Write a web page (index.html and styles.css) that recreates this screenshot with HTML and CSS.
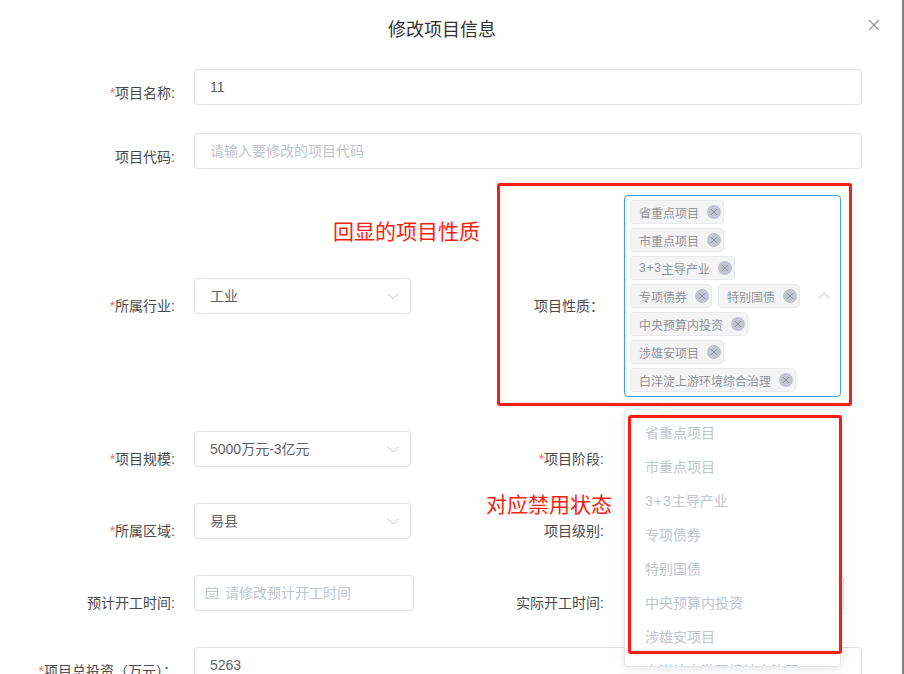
FILE: index.html
```html
<!DOCTYPE html>
<html lang="zh-CN">
<head>
<meta charset="utf-8">
<title>修改项目信息</title>
<link rel="stylesheet" href="styles.css">
</head>
<body>
<div class="dialog">
  <header class="dialog-header">
    <h2 class="dialog-title">修改项目信息</h2>
    <svg class="close" viewBox="0 0 12 12"><path d="M1 1l10 10M11 1L1 11"/></svg>
  </header>
  <form class="form">
    <div class="row row-a row-full">
      <label class="label"><i>*</i>项目名称:</label>
      <div class="field wide"><span class="value">11</span></div>
    </div>
    <div class="row row-b row-full">
      <label class="label">项目代码:</label>
      <div class="field wide"><span class="placeholder">请输入要修改的项目代码</span></div>
    </div>
    <div class="row row-c">
      <label class="label"><i>*</i>所属行业:</label>
      <div class="field select"><span class="value">工业</span><svg class="chev" viewBox="0 0 12 7"><path d="M1 1l5 5 5-5"/></svg></div>
      <label class="label label-right">项目性质：</label>
      <div class="tagbox">
        <div class="tags">
          <span class="tag">省重点项目<b class="x"><svg viewBox="0 0 14 14"><path d="M4 4l6 6M10 4l-6 6"/></svg></b></span>
          <span class="tag">市重点项目<b class="x"><svg viewBox="0 0 14 14"><path d="M4 4l6 6M10 4l-6 6"/></svg></b></span>
          <span class="tag"><span class="num">3+3</span>主导产业<b class="x"><svg viewBox="0 0 14 14"><path d="M4 4l6 6M10 4l-6 6"/></svg></b></span>
          <span class="tag">专项债券<b class="x"><svg viewBox="0 0 14 14"><path d="M4 4l6 6M10 4l-6 6"/></svg></b></span>
          <span class="tag">特别国债<b class="x"><svg viewBox="0 0 14 14"><path d="M4 4l6 6M10 4l-6 6"/></svg></b></span>
          <span class="tag">中央预算内投资<b class="x"><svg viewBox="0 0 14 14"><path d="M4 4l6 6M10 4l-6 6"/></svg></b></span>
          <span class="tag">涉雄安项目<b class="x"><svg viewBox="0 0 14 14"><path d="M4 4l6 6M10 4l-6 6"/></svg></b></span>
          <span class="tag">白洋淀上游环境综合治理<b class="x"><svg viewBox="0 0 14 14"><path d="M4 4l6 6M10 4l-6 6"/></svg></b></span>
        </div>
        <svg class="chev chev-up" viewBox="0 0 12 7"><path d="M1 6l5-5 5 5"/></svg>
      </div>
    </div>
    <div class="row">
      <label class="label"><i>*</i>项目规模:</label>
      <div class="field select"><span class="value">5000万元-3亿元</span><svg class="chev" viewBox="0 0 12 7"><path d="M1 1l5 5 5-5"/></svg></div>
      <label class="label label-right"><i>*</i>项目阶段:</label>
      <div class="field select right"></div>
    </div>
    <div class="row">
      <label class="label"><i>*</i>所属区域:</label>
      <div class="field select"><span class="value">易县</span><svg class="chev" viewBox="0 0 12 7"><path d="M1 1l5 5 5-5"/></svg></div>
      <label class="label label-right">项目级别:</label>
      <div class="field select right"></div>
    </div>
    <div class="row">
      <label class="label">预计开工时间:</label>
      <div class="field date">
        <svg class="cal" viewBox="0 0 14 14"><path d="M1.5 2.5h11v10h-11zM1.5 5.5h11M4 8h6M4 10.5h6M4 1v2M10 1v2"/></svg>
        <span class="placeholder">请修改预计开工时间</span>
      </div>
      <label class="label label-right">实际开工时间:</label>
      <div class="field date right"></div>
    </div>
    <div class="row row-full">
      <label class="label label-long"><i>*</i>项目总投资（万元）：</label>
      <div class="field wide"><span class="value">5263</span></div>
    </div>
  </form>
  <div class="popup">
    <ul class="options">
      <li>省重点项目</li>
      <li>市重点项目</li>
      <li><span class="num">3+3</span>主导产业</li>
      <li>专项债券</li>
      <li>特别国债</li>
      <li>中央预算内投资</li>
      <li>涉雄安项目</li>
      <li>白洋淀上游环境综合治理</li>
    </ul>
  </div>
  <div class="mark mark-top"></div>
  <div class="mark mark-bottom"></div>
  <div class="note note-top">回显的项目性质</div>
  <div class="note note-bottom">对应禁用状态</div>
</div>
</body>
</html>
```
FILE: styles.css
```css
html,body{margin:0;padding:0;height:100%;overflow:hidden;background:#7f7f7f}
body{font-family:"Liberation Sans","Noto Sans CJK SC",sans-serif;font-size:14px;color:#606266}
.dialog{position:relative;width:902px;height:674px;background:#fff;overflow:hidden}
.dialog-header{height:69px;position:relative}
.dialog-title{margin:0;padding:18px 18px 0 0;text-align:center;font-size:18px;line-height:24px;font-weight:400;color:#303133}
.close{position:absolute;left:868px;top:19px;width:12px;height:12px;fill:none;stroke:#909399;stroke-width:1.1}
.row{display:grid;grid-template-columns:175px 239px 190px 1fr;align-items:center;min-height:36px;margin-bottom:36px}
.row-a{margin-bottom:28px}
.row-b{margin-bottom:26px}
.row-c{margin-bottom:34px}
.label{display:block;height:20px;line-height:20px;margin:10px 0 -10px;text-align:right;color:#4a4a4d;white-space:nowrap;justify-self:end}
.row-full .label{margin:6px 0 -6px}
.row-full .label-long{margin-right:-2px}
.label i{font-style:normal;color:#f56c6c}
.field{box-sizing:border-box;height:36px;margin-left:19px;border:1px solid #dcdfe6;border-radius:4px;background:#fff;display:flex;align-items:center;padding:0 15px;position:relative;line-height:34px}
.wide{width:668px;grid-column:2 / 5}
.select{width:217px}
.date{width:220px;padding-left:10px}
.right{margin-left:20px}
.value{color:#606266}
.placeholder{color:#c0c4cc}
.chev{position:absolute;right:11px;top:14px;width:12px;height:7px;fill:none;stroke:#c0c4cc;stroke-width:1}
.cal{width:14px;height:14px;margin-right:6px;fill:none;stroke:#c0c4cc;stroke-width:1.2;flex:none}
.tagbox{box-sizing:border-box;grid-column:4;margin-left:20px;width:217px;height:202px;border:1px solid #409eff;border-radius:4px;position:relative;padding:2px 0}
.tags{display:flex;flex-wrap:wrap;margin-left:5px;width:176px;column-gap:6px}
.tag{box-sizing:border-box;display:flex;align-items:center;height:24px;margin:2px 0;padding:0 2px 0 8px;border:1px solid #e9e9eb;border-radius:4px;background:#f4f4f5;color:#909399;font-size:12px;white-space:nowrap}
.tag .num{letter-spacing:.8px}
.x{display:block;width:14px;height:14px;margin-left:8px;border-radius:50%;background:#c0c4cc}
.x svg{display:block;width:14px;height:14px;fill:none;stroke:#909399;stroke-width:1}
.chev-up{right:10px;top:96px}
.popup{position:absolute;left:624px;top:409px;box-sizing:border-box;width:217px;height:258px;border:1px solid #e4e7ed;border-radius:4px;background:#fff;box-shadow:0 2px 12px rgba(0,0,0,.1)}
.popup::before,.popup::after{content:"";position:absolute;left:35px;width:0;height:0;border:6px solid transparent;border-top:0}
.popup::before{top:-6px;border-bottom-color:#e4e7ed}
.popup::after{top:-5px;border-bottom-color:#fff}
.options{list-style:none;margin:0;padding:6px 0 0;box-sizing:border-box;height:256px;overflow:hidden}
.options li{height:34px;line-height:34px;padding-left:20px;color:#c0c4cc;white-space:nowrap}
.options .num{letter-spacing:1px}
.mark{position:absolute;box-sizing:border-box;border:3px solid #fa1e12;border-radius:3px}
.mark-top{left:497px;top:183px;width:355px;height:223px}
.mark-bottom{left:628px;top:415px;width:214px;height:239px}
.note{position:absolute;font-size:21px;line-height:28px;color:#fa1e12;white-space:nowrap}
.note-top{left:333px;top:218px}
.note-bottom{left:486px;top:491px}
```
